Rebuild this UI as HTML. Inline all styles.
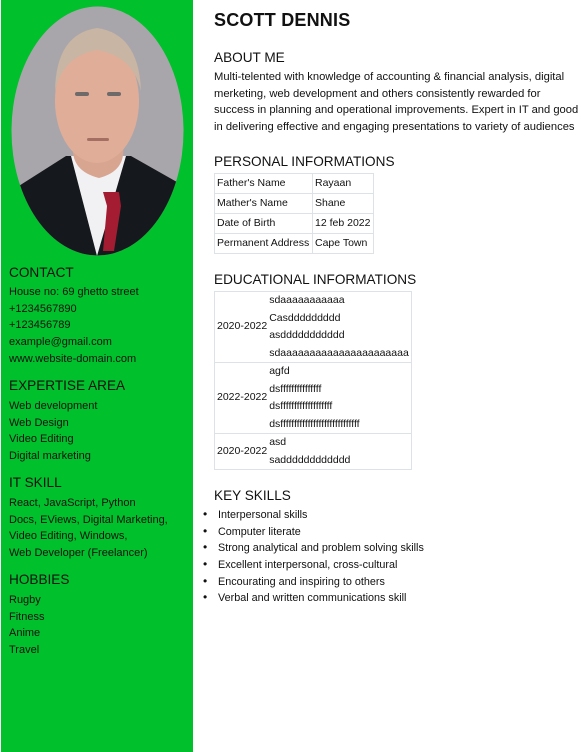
<!DOCTYPE html>
<html><head><meta charset="utf-8"><style>
*{margin:0;padding:0;box-sizing:border-box}
body{width:582px;height:752px;background:#fff;font-family:"Liberation Sans",sans-serif;color:#111;position:relative;overflow:hidden}
#side{position:absolute;left:1px;top:0;width:192px;height:752px;background:#00c02c}
.a{position:absolute;white-space:nowrap}
.h{font-size:13.6px;color:#111}
.t{font-size:11px;line-height:16.7px}
table{border-collapse:collapse;font-size:10.5px}
td{border:1px solid #dde2e6;padding:0 2px;line-height:19px;vertical-align:middle}
.e td{line-height:17.5px}
ul{font-size:10.8px;line-height:16.7px;list-style:none}
li{height:16.7px}
li:before{content:"•";display:inline-block;width:15px;font-size:12px;line-height:10px}
</style></head><body>
<div id="side"></div>
<svg class="a" style="left:11px;top:6px" width="173" height="250" viewBox="0 0 173 250">
<defs><clipPath id="c"><ellipse cx="86.5" cy="125" rx="86" ry="124.5"/></clipPath></defs>
<g clip-path="url(#c)">
<rect width="173" height="250" fill="#a9a6ab"/>
<path d="M0 185 L55 150 L120 150 L173 180 L173 250 L0 250Z" fill="#15181c"/>
<path d="M60 150 L86 250 L115 150Z" fill="#f1f1f3"/>
<path d="M92 186 L108 186 L110 200 L103 245 L92 245 L96 200Z" fill="#a31c32"/>
<path d="M62 140 Q60 165 88 172 Q115 165 112 140Z" fill="#d8a590"/>
<ellipse cx="86" cy="95" rx="42" ry="62" fill="#e0ae98"/>
<path d="M44 85 Q45 28 86 22 Q128 28 130 85 Q122 50 86 44 Q52 50 44 85Z" fill="#c8b5a3"/>
<rect x="64" y="86" width="14" height="4" rx="2" fill="#6e6a6a"/><rect x="96" y="86" width="14" height="4" rx="2" fill="#6e6a6a"/>
<rect x="76" y="132" width="22" height="3" rx="1.5" fill="#a56e62"/>
</g></svg>

<div class="a h" style="left:9px;top:265px">CONTACT</div>
<div class="a t" style="left:9px;top:284px">House no: 69 ghetto street<br>+1234567890<br>+123456789<br>example@gmail.com<br>www.website-domain.com</div>
<div class="a h" style="left:9px;top:378px">EXPERTISE AREA</div>
<div class="a t" style="left:9px;top:398px">Web development<br>Web Design<br>Video Editing<br>Digital marketing</div>
<div class="a h" style="left:9px;top:475px">IT SKILL</div>
<div class="a t" style="left:9px;top:495px">React, JavaScript, Python<br>Docs, EViews, Digital Marketing,<br>Video Editing, Windows,<br>Web Developer (Freelancer)</div>
<div class="a h" style="left:9px;top:572px">HOBBIES</div>
<div class="a t" style="left:9px;top:592px">Rugby<br>Fitness<br>Anime<br>Travel</div>

<div class="a" style="left:214px;top:10px;font-size:18px;font-weight:bold;letter-spacing:0.2px">SCOTT DENNIS</div>
<div class="a h" style="left:214px;top:50px">ABOUT ME</div>
<div class="a t" style="left:214px;top:69px;font-size:11.2px">Multi-telented with knowledge of accounting &amp; financial analysis, digital<br>merketing, web development and others consistently rewarded for<br>success in planning and operational improvements. Expert in IT and good<br>in delivering effective and engaging presentations to variety of audiences</div>
<div class="a h" style="left:214px;top:154px">PERSONAL INFORMATIONS</div>
<table class="a" style="left:214px;top:173px">
<tr><td style="width:98px">Father's Name</td><td style="width:61px">Rayaan</td></tr>
<tr><td>Mather's Name</td><td>Shane</td></tr>
<tr><td>Date of Birth</td><td>12 feb 2022</td></tr>
<tr><td>Permanent Address</td><td>Cape Town</td></tr>
</table>
<div class="a h" style="left:214px;top:272px">EDUCATIONAL INFORMATIONS</div>
<table class="a e" style="left:214px;top:291px;width:195px">
<tr><td style="width:55px;border-right:none">2020-2022</td><td style="border-left:none;padding-left:0">sdaaaaaaaaaaa<br>Casddddddddd<br>asddddddddddd<br>sdaaaaaaaaaaaaaaaaaaaaaa</td></tr>
<tr><td style="border-right:none">2022-2022</td><td style="border-left:none;padding-left:0">agfd<br>dsfffffffffffffff<br>dsfffffffffffffffffff<br>dsfffffffffffffffffffffffffffff</td></tr>
<tr><td style="border-right:none">2020-2022</td><td style="border-left:none;padding-left:0">asd<br>sadddddddddddd</td></tr>
</table>
<div class="a h" style="left:214px;top:488px">KEY SKILLS</div>
<ul class="a" style="left:203px;top:507px">
<li>Interpersonal skills</li><li>Computer literate</li><li>Strong analytical and problem solving skills</li><li>Excellent interpersonal, cross-cultural</li><li>Encourating and inspiring to others</li><li>Verbal and written communications skill</li>
</ul>
</body></html>
